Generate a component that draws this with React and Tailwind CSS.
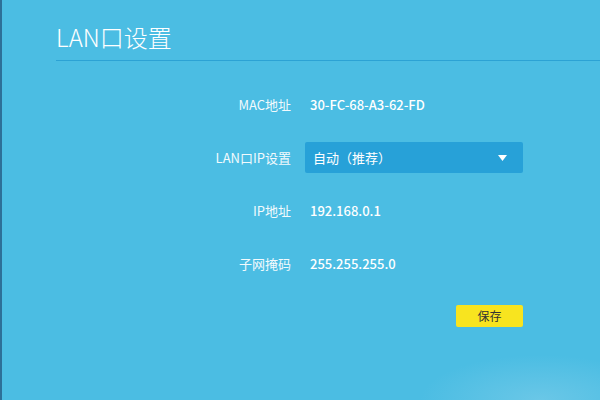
import React from 'react';

const rows = [
  { label: 'MAC地址', value: '30-FC-68-A3-62-FD' },
  { label: 'LAN口IP设置', select: '自动（推荐）' },
  { label: 'IP地址', value: '192.168.0.1' },
  { label: '子网掩码', value: '255.255.255.0' },
];

function Row({ label, value, select }) {
  return (
    <div className="flex h-[31px] items-center">
      <div className="w-[289px] shrink-0 text-right text-[13px] text-[#f2fafd]">{label}</div>
      {select ? (
        <div className="ml-[14px] flex h-[31px] w-[218px] items-center justify-between rounded-[2px] bg-[#27a1d8] pl-[8px] pr-[16px] text-[13px] text-white">
          <span>{select}</span>
          {/* caret */}
          <svg width="9" height="6" viewBox="0 0 9 6">
            <path d="M0 0 H9 L4.5 6 Z" fill="#ffffff" />
          </svg>
        </div>
      ) : (
        <div className="ml-[19px] text-[13px] font-medium text-white">{value}</div>
      )}
    </div>
  );
}

export default function App() {
  return (
    <div
      className="flex h-[400px] w-[600px] flex-col overflow-hidden border-l-2 border-[#2d7098] bg-[radial-gradient(ellipse_120px_45px_at_90%_100%,#6ac7e7_0%,#4bbde3_100%)]"
      style={{ fontFamily: '"Noto Sans CJK SC", "Noto Sans", sans-serif' }}
    >
      <div className="ml-[54px] border-b border-[#2ca2d4] pt-[21px] pb-[7px]">
        <h1 className="text-[24px] leading-[32px] font-light text-white">LAN口设置</h1>
      </div>

      <div className="flex w-[521px] flex-col pt-[28px]">
        <div className="flex flex-col gap-[22px]">
          {rows.map((r) => (
            <Row key={r.label} {...r} />
          ))}
        </div>
        <div className="mt-[26px] flex justify-end">
          <button className="h-[22px] w-[67px] rounded-[2px] bg-[#f8e41f] text-[12px] text-[#333333]">
            保存
          </button>
        </div>
      </div>
    </div>
  );
}
